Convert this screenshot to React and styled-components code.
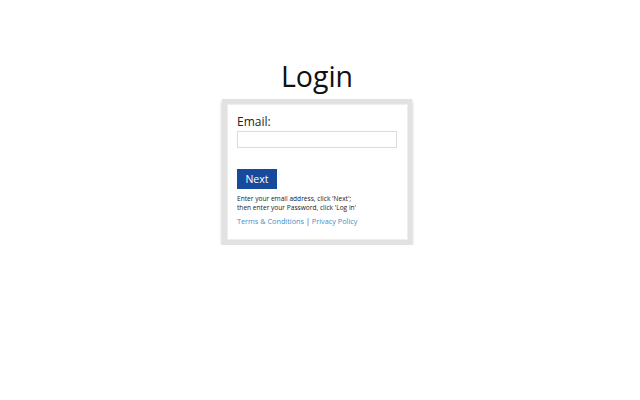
import styled, { createGlobalStyle } from "styled-components";

const GlobalStyle = createGlobalStyle`
  html, body {
    margin: 0;
    padding: 0;
    background: #fff;
    font-family: "Open Sans", "Liberation Sans", sans-serif;
  }
`

const Page = styled.div`
  width: 634px;
  display: flex;
  flex-direction: column;
  align-items: center;
  padding-top: 57px;
`

const Title = styled.h1`
  margin: 0 0 4px;
  font-size: 28.5px;
  font-weight: 400;
  line-height: 38px;
  color: #111;
`

const Card = styled.div`
  border: 5px solid #e2e2e2;
  border-right-width: 4px;
  box-shadow: 0 2px 3px rgba(0, 0, 0, 0.25), inset 0 0 0 1px #eee;
  background: #fff;
  padding: 10px 10px 14px;
  box-sizing: content-box;
  width: 161px;
`

const Label = styled.label`
  display: block;
  font-size: 12px;
  line-height: 16px;
  color: #222;
  margin-bottom: 1px;
`

const Input = styled.input`
  display: block;
  width: 160px;
  height: 17px;
  box-sizing: border-box;
  border: 1px solid #dcdcdc;
  padding: 0 4px;
  margin: 0 0 21px;
  outline: none;
`

const Button = styled.button`
  display: block;
  width: 40px;
  height: 20px;
  padding: 0;
  border: none;
  background: #174a9c;
  color: #fff;
  font-family: inherit;
  font-size: 10.5px;
  line-height: 20px;
  margin-bottom: 5px;
`

const Help = styled.p`
  margin: 0 0 4px;
  font-size: 6.6px;
  line-height: 9px;
  color: #222;
`

const Links = styled.div`
  font-size: 7.3px;
  line-height: 10px;
  color: #444;
`

const Link = styled.a`
  color: #3b8fcb;
  text-decoration: none;
`

export default function App() {
    return (
        <>
            <GlobalStyle/>
            <Page>
                <Title>Login</Title>
                <Card>
                    <Label htmlFor="email">Email:</Label>
                    <Input id="email" type="text"/>
                    <Button>Next</Button>
                    <Help>
                        Enter your email address, click 'Next';<br/>
                        then enter your Password, click 'Log in'
                    </Help>
                    <Links>
                        <Link href="#">Terms &amp; Conditions</Link> | <Link href="#">Privacy Policy</Link>
                    </Links>
                </Card>
            </Page>
        </>
    )
}
